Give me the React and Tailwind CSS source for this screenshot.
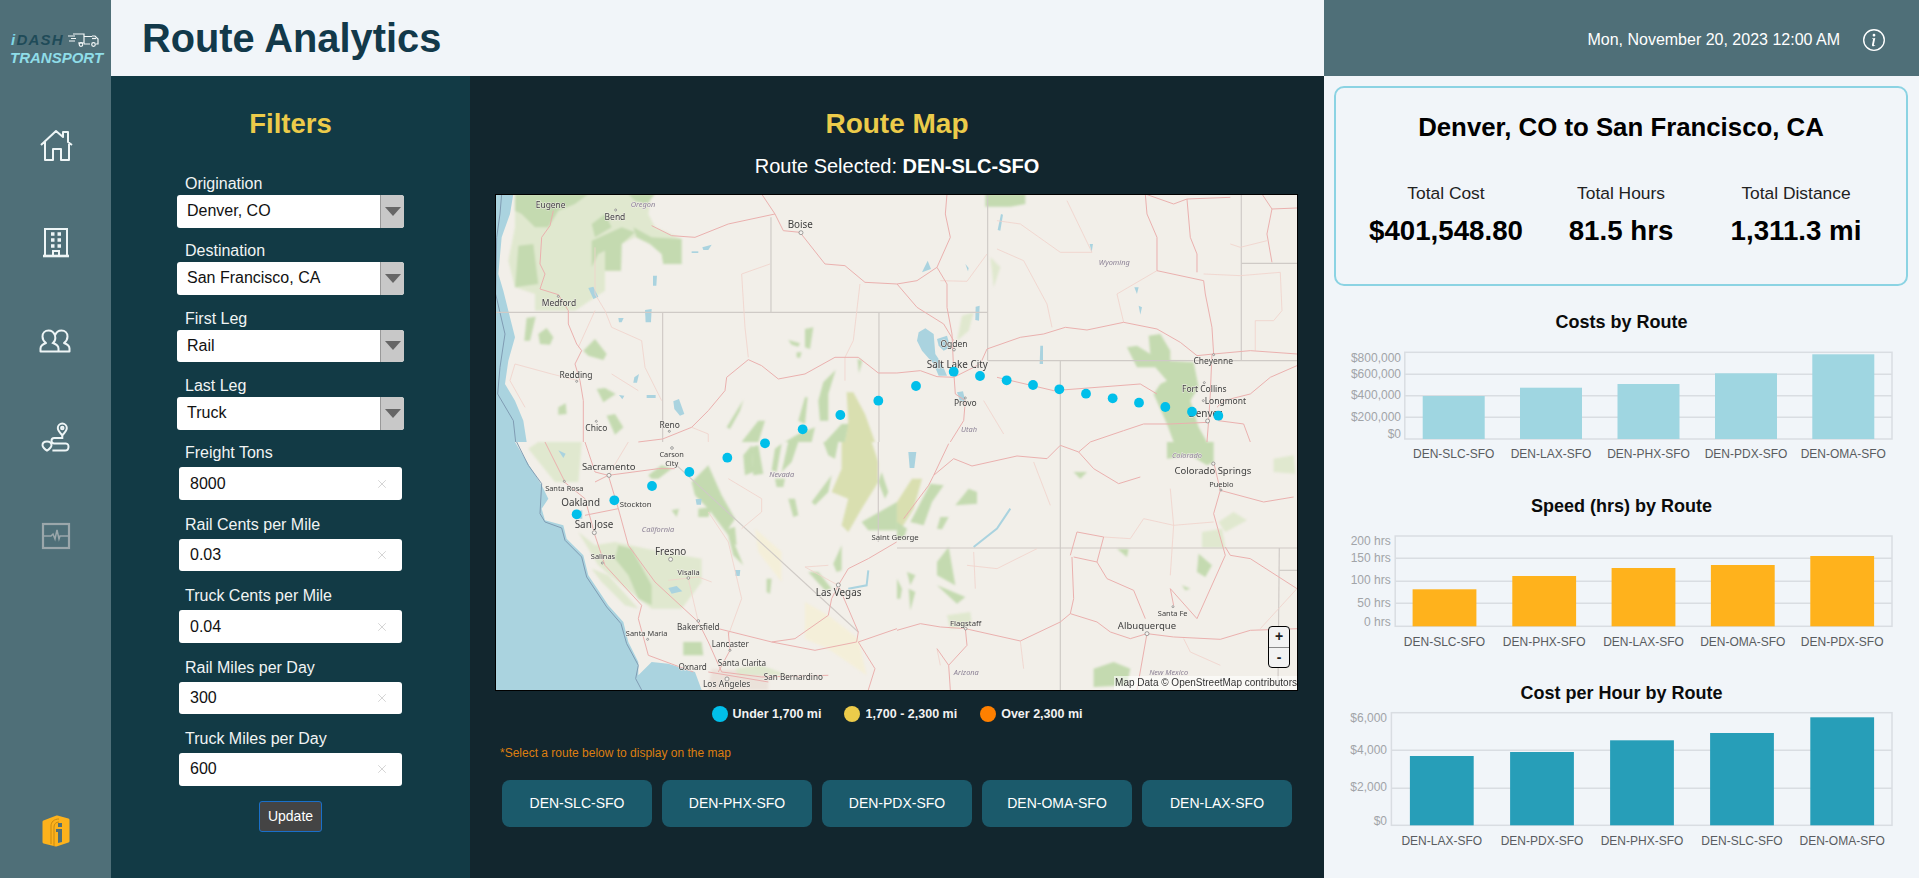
import React from "react";
import { BsInfoCircle } from "react-icons/bs";
import { X } from "lucide-react";

const selects = [
  { label: "Origination", value: "Denver, CO" },
  { label: "Destination", value: "San Francisco, CA" },
  { label: "First Leg", value: "Rail" },
  { label: "Last Leg", value: "Truck" },
];

const inputs = [
  { label: "Freight Tons", value: "8000" },
  { label: "Rail Cents per Mile", value: "0.03" },
  { label: "Truck Cents per Mile", value: "0.04" },
  { label: "Rail Miles per Day", value: "300" },
  { label: "Truck Miles per Day", value: "600" },
];

const routes = ["DEN-SLC-SFO", "DEN-PHX-SFO", "DEN-PDX-SFO", "DEN-OMA-SFO", "DEN-LAX-SFO"];

const stats = [
  { label: "Total Cost", value: "$401,548.80" },
  { label: "Total Hours", value: "81.5 hrs" },
  { label: "Total Distance", value: "1,311.3 mi" },
];

// chart numbers are page coordinates read off the picture, top is the page y of the svg
const charts = [
  {
    title: "Costs by Route",
    titleClass: "mt-[24px]",
    top: 334,
    height: 130,
    left: 1404.8,
    plotTop: 352.3,
    plotBottom: 439,
    grid: [374.3, 395.7, 417.3],
    labelX: 1401,
    labelY: 453.7,
    barWidth: 62,
    color: "#9fd6e1",
    ticks: [["$800,000", 357.7], ["$600,000", 374], ["$400,000", 394.7], ["$200,000", 416.7], ["$0", 434]],
    bars: [["DEN-SLC-SFO", 1453.7, 396], ["DEN-LAX-SFO", 1551, 387.7], ["DEN-PHX-SFO", 1648.5, 384], ["DEN-PDX-SFO", 1746, 373.3], ["DEN-OMA-SFO", 1843.3, 354.3]],
  },
  {
    title: "Speed (hrs) by Route",
    titleClass: "mt-[30px]",
    top: 518,
    height: 130,
    left: 1395.2,
    plotTop: 536,
    plotBottom: 626.3,
    grid: [558.3, 581.3, 603.3],
    labelX: 1390.7,
    labelY: 641.7,
    barWidth: 63.8,
    color: "#ffb21c",
    ticks: [["200 hrs", 540.7], ["150 hrs", 557.7], ["100 hrs", 580.3], ["50 hrs", 602.7], ["0 hrs", 621.7]],
    bars: [["DEN-SLC-SFO", 1444.5, 589.3], ["DEN-PHX-SFO", 1544.2, 576], ["DEN-LAX-SFO", 1643.5, 568], ["DEN-OMA-SFO", 1742.8, 565], ["DEN-PDX-SFO", 1842.2, 556]],
  },
  {
    title: "Cost per Hour by Route",
    titleClass: "mt-[33px]",
    top: 705,
    height: 145,
    left: 1391.4,
    plotTop: 712.7,
    plotBottom: 825.3,
    grid: [750.3, 788.3],
    labelX: 1387,
    labelY: 840.7,
    barWidth: 63.8,
    color: "#279eb8",
    ticks: [["$6,000", 717.7], ["$4,000", 749.7], ["$2,000", 786.7], ["$0", 821]],
    bars: [["DEN-LAX-SFO", 1441.8, 756], ["DEN-PDX-SFO", 1542, 752], ["DEN-PHX-SFO", 1642, 740.3], ["DEN-SLC-SFO", 1742, 733], ["DEN-OMA-SFO", 1842.2, 717.3]],
  },
];

// map pieces, each quadrant is in its own 1206x744 space (3 units = 1px)
const quadrants = [
  {
    x: 0,
    y: 0,
    light: [
      "M60 0 L470 0 L460 60 L480 100 L560 135 L560 210 L505 210 L500 180 L465 150 L420 130 L380 150 L378 230 L330 230 L330 290 L300 310 L240 350 L120 350 L120 300 L60 280 L40 200 L60 100Z",
    ],
    forest: [
      "M60 0 L280 0 L240 30 L190 50 L160 100 L120 100 L80 60 L60 50Z",
      "M70 155 L115 150 L130 270 L60 280 L65 220Z",
      "M290 140 L380 100 L420 115 L380 150 L378 230 L330 230 L330 170 L310 180 L290 220Z",
      "M290 90 L330 60 L350 100 L300 130Z",
      "M400 0 L480 0 L455 30 L420 20Z",
      "M415 100 L470 130 L560 135 L560 210 L505 210 L500 180 L465 150 L425 130Z",
      "M95 372 L122 368 L105 440 L88 440Z",
      "M130 420 L155 402 L175 430 L165 452 L135 450Z",
      "M265 470 L300 435 L335 480 L325 498 L280 485Z",
      "M305 585 L330 582 L362 600 L325 625Z",
      "M335 665 L360 660 L385 700 L360 722Z",
      "M190 640 L212 628 L215 660 L190 662Z",
      "M930 405 L955 400 L945 465 L930 460Z",
      "M880 438 L915 448 L910 458 L890 452Z",
      "M905 475 L920 475 L915 492 L905 490Z",
      "M1088 495 L1102 500 L1092 538Z",
      "M985 565 L1022 528 L1000 600 L1000 680 L975 680 L970 620Z",
      "M695 700 L745 618 L735 650 L705 705Z",
      "M930 610 L938 610 L930 690 L910 680Z",
      "M740 744 L790 680 L810 680 L790 744Z",
      "M870 744 L910 720 L960 700 L950 744Z",
      "M990 744 L1040 690 L1060 690 L1050 744Z",
    ],
    olive: ["M1055 595 L1075 595 L1110 660 L1140 744 L1050 744 L1060 680Z"],
    water: [
      "M0 0 L55 0 L45 60 L20 130 L10 240 L25 290 L40 350 L50 390 L60 430 L40 500 L30 570 L60 620 L85 680 L95 744 L0 744Z",
      "M535 622 L552 615 L568 660 L555 665 L538 645Z",
      "M450 348 L470 345 L468 385 L452 385Z",
      "M280 282 L295 278 L310 308 L295 315Z",
      "M622 160 L650 152 L640 168 L625 168Z",
      "M590 172 L610 172 L610 177 L590 177Z",
      "M474 245 L486 245 L484 275 L474 275Z",
      "M370 372 L386 372 L380 385 L372 385Z",
      "M418 550 L432 540 L426 566 L415 566Z",
      "M372 603 L388 605 L382 616Z",
      "M455 603 L482 603 L482 612 L455 612Z",
    ],
    major: [
      "175,50 165,95 140,130 135,210 150,240 135,285 190,302 220,350 220,390 245,450 260,470 240,510 255,560 265,620 265,744",
      "800,0 840,60 865,110 915,115 990,210 1050,215 1110,265 1206,270",
      "840,60 700,90 600,130 530,125 470,95",
      "430,744 503,735 590,700 640,650 690,590 695,550 760,497 800,515 850,555 930,540 1020,490 1090,490 1150,537 1206,537",
    ],
    minor: [
      "740,240 825,210",
      "740,240 750,400 760,490",
      "1095,270 1075,440 1050,490 1050,560",
      "300,160 300,300 330,350 350,400 440,440 450,520 500,620",
      "60,510 170,540 250,560",
      "60,510 45,560 90,640",
      "350,540 430,590",
      "300,350 250,460",
      "590,700 640,720 640,744",
    ],
    lines: ["828,70 828,355", "0,355 1206,355", "503,355 503,744", "1152,355 1152,744"],
    coast: "20,0 15,60 5,130 2,300 30,420 15,520 8,600 55,680 62,744",
    labels: [
      ["Eugene", 167, 41, 24],
      ["Bend", 360, 77, 24],
      ["Oregon", 444, 40, 21, true],
      ["Boise", 916, 103, 28],
      ["Medford", 192, 335, 24],
      ["Redding", 243, 552, 24],
      ["Chico", 304, 711, 24],
      ["Reno", 524, 702, 24],
    ],
    rings: [[918, 116, 6], [190, 307, 3], [245, 562, 3], [304, 682, 3], [362, 48, 3], [523, 712, 3]],
  },
  {
    x: 402,
    y: 0,
    light: ["M195 365 L230 355 L215 410 L180 440Z", "M280 190 L310 220 L290 280 L285 230Z"],
    forest: [
      "M265 0 L385 0 L385 30 L340 38 L265 38Z",
      "M690 460 L720 455 L760 480 L755 425 L790 420 L820 470 L820 500 L890 505 L905 580 L880 620 L890 650 L905 700 L930 744 L830 744 L810 690 L770 600 L790 570 L810 560 L775 520 L720 520Z",
    ],
    olive: [],
    water: [
      "M65 415 L85 403 L110 420 L115 480 L135 510 L150 545 L125 545 L110 510 L75 470 L60 440Z",
      "M120 435 L150 425 L160 460 L140 470 L125 455Z",
      "M236 338 L248 335 L246 380 L235 378Z",
      "M312 60 L318 62 L310 110 L302 108Z",
      "M430 455 L438 455 L438 510 L428 510Z",
      "M75 235 L92 200 L102 225Z",
      "M205 210 L215 222 L213 232Z",
      "M180 595 L198 592 L205 622 L190 625Z",
      "M712 280 L725 280 L720 300Z",
      "M725 335 L735 340 L730 362Z",
      "M578 150 L588 150 L584 175Z",
    ],
    major: [
      "0,270 60,260 120,220 160,130 145,60 150,0",
      "120,220 150,270 150,340 165,420 170,530 175,600 205,620 200,680 160,744",
      "0,270 60,340 140,390 170,440",
      "0,537 70,530 120,548 170,550 250,510 270,465 370,430 440,420 505,400 570,408 680,385 780,405 850,445 900,485 950,480 1060,470 1200,480",
      "950,480 945,400 925,300 920,260 780,230 780,130 750,60 745,0",
      "745,0 830,30 870,15 1000,10",
      "870,15 880,130 900,180 900,235",
      "945,480 940,600 935,680 930,744",
      "964,680 1040,690 1060,744",
      "935,685 820,690 740,690 680,710 580,744",
      "300,550 470,590 730,570 780,600",
      "1200,515 1120,550 1060,600 980,620 960,640",
      "1095,0 1125,45 1110,120 1125,205",
      "1125,45 1200,42",
    ],
    minor: [
      "300,80 370,90 490,175 585,175 510,20",
      "300,165 380,200 450,330 465,400",
      "660,300 680,385",
      "660,300 780,230",
      "1000,150 1030,160 1110,140",
      "920,240 1030,245 1150,235 1155,350 1130,380 1075,380 1075,470",
      "130,260 210,262 270,180",
      "260,620 320,720",
    ],
    lines: [
      "272,0 272,500",
      "0,355 272,355",
      "272,500 1200,500",
      "490,500 490,744",
      "1033,0 1033,500",
      "1033,208 1200,208",
    ],
    labels: [
      ["Wyoming", 652, 212, 21, true],
      ["Ogden", 171, 459, 24],
      ["Salt Lake City", 181, 523, 28],
      ["Provo", 205, 637, 24],
      ["Utah", 216, 715, 21, true],
      ["Cheyenne", 949, 509, 24],
      ["Fort Collins", 922, 593, 24],
      ["Longmont", 985, 629, 24],
      ["Denver", 925, 668, 28],
    ],
    rings: [[171, 467, 4], [205, 612, 3], [950, 482, 3], [922, 566, 3], [919, 620, 3], [932, 681, 6]],
  },
  {
    x: 0,
    y: 248,
    light: [
      "M250 270 L300 310 L360 300 L500 330 L620 350 L620 420 L560 500 L470 500 L380 430 L310 370Z",
      "M720 680 L800 670 L880 700 L800 700 L730 700Z",
      "M100 20 L130 0 L260 0 L250 120 L180 120Z",
      "M290 380 L340 400 L430 500 L390 490 L320 420Z",
    ],
    forest: [
      "M370 310 L410 320 L470 430 L470 490 L430 470 L400 400 L360 350Z",
      "M590 120 L640 70 L680 160 L720 230 L700 260 L745 370 L715 340 L700 280 L640 200 L600 160Z",
      "M460 100 L500 70 L530 80 L490 110 L470 110Z",
      "M745 40 L770 10 L775 90 L750 100Z",
      "M770 15 L790 10 L805 95 L775 100Z",
      "M840 20 L860 5 L845 90 L830 85Z",
      "M880 0 L910 0 L890 60 L860 90Z",
      "M880 170 L900 170 L910 220 L895 225Z",
      "M950 180 L1010 100 L1000 150 L960 190Z",
      "M840 110 L870 110 L865 135 L845 135Z",
      "M985 0 L1030 0 L1020 50 L1000 40Z",
      "M1100 240 L1206 180 L1206 265 L1120 265Z",
      "M1160 90 L1180 150 L1170 170 L1150 120Z",
      "M940 390 L970 390 L1010 440 L990 445Z",
      "M1015 365 L1040 310 L1040 385 L1025 390Z",
      "M815 410 L830 410 L825 455 L815 450Z",
      "M565 600 L620 600 L625 640 L565 640Z",
      "M530 205 L552 200 L545 225Z",
      "M610 200 L650 195 L640 225 L610 225Z",
      "M700 260 L720 255 L725 310 L705 300Z",
    ],
    olive: ["M1040 0 L1130 0 L1150 60 L1150 120 L1100 200 L1060 270 L1040 250 L1060 170 L1010 150 L1040 80Z"],
    sand: ["M930 480 L1000 520 L1090 590 L1115 700 L1000 620 L930 590Z", "M780 260 L860 330 L860 420 L790 330Z"],
    urban: ["M650 680 L820 690 L820 744 L640 744Z"],
    water: [
      "M0 0 L60 0 L90 50 L140 130 L160 170 L140 200 L150 235 L205 250 L215 290 L265 340 L280 400 L340 490 L385 540 L400 600 L430 660 L430 700 L470 660 L520 665 L600 690 L620 744 L0 744Z",
      "M602 172 L620 170 L618 188 L605 188Z",
      "M720 384 L736 384 L734 402 L722 402Z",
      "M520 438 L545 432 L562 448 L530 455Z",
      "M190 25 L212 35 L205 48Z",
      "M240 210 L262 205 L262 230 L240 232Z",
    ],
    major: [
      "340,100 370,200 400,310 480,420 610,540 640,600 680,690",
      "300,120 340,100 490,80 540,80",
      "208,120 270,170 300,280 330,370 440,490 430,530 460,640 595,690",
      "370,200 270,220",
      "670,560 830,600 900,590 1000,520 1010,470 1030,430",
      "830,600 960,625 1085,600 1090,570 1030,430 1060,380 1120,350 1205,300",
      "700,570 705,625 670,690",
      "1090,600 1206,560",
      "680,690 800,705 1000,700",
      "1090,600 1140,680 1120,744",
      "640,690 820,720",
      "150,0 210,120",
      "270,0 300,90 340,100",
    ],
    minor: [
      "520,415 610,405 650,420",
      "580,410 610,540",
      "1030,430 930,375 1000,370",
      "700,580 740,470 700,300 640,210",
      "700,110 800,170 800,210 740,260",
      "400,0 340,100",
    ],
    lines: ["545,70 1090,570", "1150,0 1150,300"],
    coast: "65,0 100,70 140,125 135,215 150,240 200,258 210,295 260,345 275,405 335,495 378,545 395,605 430,670 422,710 440,744",
    lake: "1060,440 1115,430 1120,385",
    labels: [
      ["Carson", 530, 45, 21],
      ["City", 530, 73, 21],
      ["Sacramento", 341, 85, 27],
      ["Santa Rosa", 208, 146, 21],
      ["Oakland", 257, 193, 28],
      ["Stockton", 422, 194, 22],
      ["San Jose", 297, 258, 28],
      ["California", 489, 271, 21, true],
      ["Fresno", 527, 340, 28],
      ["Salinas", 324, 352, 21],
      ["Visalia", 581, 398, 21],
      ["Nevada", 860, 106, 21, true],
      ["Las Vegas", 1031, 463, 28],
      ["Bakersfield", 610, 564, 23],
      ["Santa Maria", 455, 582, 21],
      ["Lancaster", 706, 616, 23],
      ["Oxnard", 593, 683, 23],
      ["Santa Clarita", 741, 672, 23],
      ["San Bernardino", 895, 713, 23],
      ["Los Angeles", 695, 736, 24],
    ],
    rings: [[342, 100, 6], [298, 272, 6], [527, 352, 6], [580, 408, 4], [610, 537, 4], [1030, 429, 6], [696, 711, 6], [705, 625, 3], [531, 18, 4], [208, 118, 3], [322, 363, 3], [458, 592, 3]],
  },
  {
    x: 402,
    y: 248,
    light: [
      "M150 520 L220 510 L225 550 L160 560Z",
      "M965 240 L1010 210 L1050 235 L985 270Z",
      "M915 270 L975 260 L985 318 L915 318Z",
      "M1130 50 L1190 40 L1195 95 L1130 90Z",
    ],
    forest: [
      "M40 240 L100 125 L140 130 L105 180 L80 250Z",
      "M120 260 L130 225 L155 225 L135 262Z",
      "M175 190 L215 140 L240 150 L240 185Z",
      "M120 360 L155 315 L175 430 L120 400Z",
      "M120 430 L205 465 L180 485Z",
      "M30 390 L55 400 L40 430Z",
      "M35 440 L55 450 L40 505Z",
      "M0 410 L15 440 L10 470 L0 470Z",
      "M530 90 L570 90 L550 110Z",
      "M905 335 L945 370 L925 405 L900 390Z",
      "M660 320 L695 320 L690 345Z",
      "M590 680 L650 660 L700 680 L690 730 L590 735Z",
      "M810 0 L950 0 L950 60 L930 70 L880 40 L810 50Z",
      "M855 430 L880 440 L865 445Z",
      "M0 240 L30 260 L20 290 L0 290Z",
    ],
    olive: ["M0 180 L45 110 L75 110 L50 200 L0 280Z"],
    water: ["M34 30 L58 30 L52 78 L38 78Z"],
    major: [
      "0,565 70,545 130,555 205,560 370,597 490,540 520,515 600,540 640,570 700,590 750,575 830,585 970,592 1060,565 1206,560",
      "750,575 720,744",
      "205,560 210,610 155,670 160,744",
      "155,670 120,620",
      "830,490 820,440",
      "820,440 900,530 985,340 950,215 970,145",
      "745,530 710,445 630,410 600,360 530,345",
      "525,345 530,470 520,515",
      "20,230 95,130 110,100 155,5",
      "110,100 170,50 225,72 360,42 450,50 490,10 545,30 590,80 665,125 730,105",
      "545,30 580,0",
      "985,315 1000,340 1060,350 1200,440",
      "950,60 970,145 1100,180 1190,165",
      "540,270 620,285 600,360",
      "540,270 520,340",
    ],
    minor: [
      "230,330 235,440",
      "210,370 300,380 420,320",
      "820,140 830,250 820,400",
      "620,285 700,290 740,230 830,250 950,240",
      "460,190 410,60",
      "860,590 880,630 970,670",
      "370,597 380,680",
      "1090,560 1200,440",
      "120,620 130,670",
    ],
    lines: ["0,318 1200,318", "490,0 490,744", "1147,318 1143,744", "1147,385 1200,385"],
    lake: "230,315 300,260 340,200",
    labels: [
      ["Colorado", 870, 47, 21, true],
      ["Colorado Springs", 948, 97, 27],
      ["Pueblo", 973, 135, 21],
      ["Santa Fe", 827, 522, 21],
      ["Albuquerque", 750, 562, 27],
      ["Flagstaff", 206, 551, 22],
      ["Arizona", 208, 698, 21, true],
      ["New Mexico", 815, 700, 21, true],
      ["Saint George", -6, 293, 22],
    ],
    rings: [[949, 65, 5], [972, 144, 3], [828, 494, 3], [750, 575, 6], [206, 560, 4]],
  },
];

const pins = [
  [1150, 620], [1036, 663], [923, 706], [810, 748],
  [697, 791], [583, 834], [471, 876], [358, 919], [245, 961],
  [1263, 576], [1376, 533], [1455, 546], [1535, 559], [1614, 573], [1693, 586],
  [1773, 599], [1853, 613], [1932, 626], [2011, 639], [2091, 653], [2170, 665],
];

const RouteMap = () => (
  <svg viewBox="1 1 801 495" className="block w-[801px] h-[495px] font-['Noto_Sans',sans-serif]">
    <defs>
      <filter id="patch">
        <feGaussianBlur stdDeviation="1.1" />
      </filter>
      <filter id="soft">
        <feGaussianBlur stdDeviation="0.35" />
      </filter>
    </defs>
    <rect x="0" y="0" width="804" height="496" fill="#f2efe9" />
    <g filter="url(#patch)">
      {quadrants.map((q) => (
        <g key={`${q.x}-${q.y}`} transform={`translate(${q.x} ${q.y}) scale(0.3333)`}>
          {(q.urban || []).map((d) => <path key={d} d={d} fill="#ebe2da" />)}
          {(q.sand || []).map((d) => <path key={d} d={d} fill="#f4efd9" />)}
          {q.light.map((d) => <path key={d} d={d} fill="#e0e8cf" />)}
          {q.olive.map((d) => <path key={d} d={d} fill="#d9dfb0" />)}
          {q.forest.map((d) => <path key={d} d={d} fill="#c4dab0" />)}
        </g>
      ))}
    </g>
    <g filter="url(#soft)">
      {quadrants.map((q) => (
        <g key={`${q.x}-${q.y}`} transform={`translate(${q.x} ${q.y}) scale(0.3333)`}>
          {q.water.map((d) => <path key={d} d={d} fill="#aad3df" />)}
          {q.coast && <polyline points={q.coast} fill="none" stroke="#7f9cb3" strokeWidth="3" />}
          {q.lake && <polyline points={q.lake} fill="none" stroke="#aad3df" strokeWidth="6" />}
          {q.lines.map((p) => <polyline key={p} points={p} fill="none" stroke="#cfcac6" strokeWidth="3.5" />)}
          {q.minor.map((p) => <polyline key={p} points={p} fill="none" stroke="#f0d3cb" strokeWidth="2.5" />)}
          {q.major.map((p) => <polyline key={p} points={p} fill="none" stroke="#eab0ae" strokeWidth="3" strokeLinejoin="round" />)}
        </g>
      ))}
    </g>
    {quadrants.map((q) => (
      <g key={`t-${q.x}-${q.y}`} transform={`translate(${q.x} ${q.y}) scale(0.3333)`}>
        {q.rings.map(([cx, cy, r]) => (
          <circle key={`${cx}-${cy}`} cx={cx} cy={cy} r={r} fill="#f5f3ef" stroke="#777" strokeWidth="2" />
        ))}
        {q.labels.map(([text, x, y, size, italic]) => (
          <text
            key={text}
            x={x}
            y={y}
            fontSize={size * 1.06}
            textAnchor="middle"
            fill={italic ? "#8c8296" : "#404040"}
            fontStyle={italic ? "italic" : "normal"}
            stroke="#f2efe9"
            strokeWidth="2.5"
            paintOrder="stroke"
          >
            {text}
          </text>
        ))}
      </g>
    ))}
    {pins.map(([x, y]) => (
      <circle key={`${x}-${y}`} cx={x / 3} cy={y / 3} r="4.9" fill="#01bfea" />
    ))}
  </svg>
);

const Chart = ({ chart }) => {
  const y = (v) => v - chart.top;
  const x = (v) => v - 1324;
  const right = x(1892);
  return (
    <>
      <h3 className={`${chart.titleClass} h-[24px] text-center text-[18px] leading-[24px] font-bold text-[#0b0b0b]`}>
        {chart.title}
      </h3>
      <svg width="595" height={chart.height} className="block">
        <rect
          x={x(chart.left)}
          y={y(chart.plotTop)}
          width={right - x(chart.left)}
          height={chart.plotBottom - chart.plotTop}
          fill="none"
          stroke="#d9dde2"
          strokeWidth="1.5"
        />
        {chart.grid.map((g) => (
          <line key={g} x1={x(chart.left)} x2={right} y1={y(g)} y2={y(g)} stroke="#d9dde2" strokeWidth="1.5" />
        ))}
        {chart.ticks.map(([label, ty]) => (
          <text key={label} x={x(chart.labelX)} y={y(ty) + 4} textAnchor="end" fontSize="12" fill="#a1a4a8">
            {label}
          </text>
        ))}
        {chart.bars.map(([label, cx, top]) => (
          <g key={label}>
            <rect
              x={x(cx) - chart.barWidth / 2}
              y={y(top)}
              width={chart.barWidth}
              height={chart.plotBottom - top}
              fill={chart.color}
            />
            <text x={x(cx)} y={y(chart.labelY) + 4} textAnchor="middle" fontSize="12" fill="#595c60">
              {label}
            </text>
          </g>
        ))}
      </svg>
    </>
  );
};

const SelectField = ({ label, value }) => (
  <div className="mb-[14.73px]">
    <div className="pl-[8px] mb-[2px] h-[18px] text-[16px] leading-[18px] text-[#f1f4f4]">{label}</div>
    <div className="flex h-[32.6px] w-[227px] rounded-[3px] bg-white overflow-hidden">
      <div className="flex-1 pl-[10px] text-[16px] leading-[32px] text-[#111]">{value}</div>
      <div className="flex w-[24px] items-center justify-center border-l border-[#999] bg-[#c8c8c8]">
        <div className="h-0 w-0 border-x-[8px] border-t-[9px] border-x-transparent border-t-[#666]" />
      </div>
    </div>
  </div>
);

const InputField = ({ label, value }) => (
  <div className="mb-[15.9px]">
    <div className="pl-[8px] mb-[5px] h-[18px] text-[16px] leading-[18px] text-[#f1f4f4]">{label}</div>
    <div className="ml-[2px] flex h-[32.6px] w-[223px] items-center justify-between rounded-[3px] bg-white pl-[11px] pr-[13px]">
      <span className="text-[16px] text-[#111]">{value}</span>
      <X size={14} strokeWidth={1.5} className="text-[#cfcfcf]" />
    </div>
  </div>
);

const iconClass = "w-[40px] h-[40px] fill-none stroke-[#eef5f6] stroke-[2]";

const Sidebar = () => (
  <aside className="flex w-[111px] shrink-0 flex-col items-center bg-[#4f6f78]">
    <div className="relative h-[76px] w-full italic font-bold">
      <div className="absolute left-[11px] top-[32px] text-[15px] leading-[16px] tracking-[1.2px] text-[#1f4b58]">
        <span className="text-[#7fd8e6]">i</span>DASH
      </div>
      <svg viewBox="0 0 32 14" className="absolute left-[68px] top-[33px] w-[32px] h-[14px] fill-none stroke-[#f4f8f8] stroke-[1.2]">
        <path d="M0 3h7M3 5.5h5M1 8h6M5 1h11v9h-6M16 3.5h5l3 0M16 10V3.5M24 3h3l3 3v5h-2M22 11h-6" />
        <circle cx="13" cy="11.5" r="1.8" />
        <circle cx="25.5" cy="11.5" r="1.8" />
        <path d="M24 5.5h4" />
      </svg>
      <div className="absolute left-[10px] top-[50px] text-[15px] leading-[16px] text-[#8fdde8]">
        TRANSPORT
      </div>
    </div>
    <div className="mt-[21px] flex flex-col items-center">
      <div className="flex h-[97.5px] items-center">
        <svg viewBox="0 0 40 40" className={iconClass}>
          <path d="M6 20 21 6l7 6V7h5v10l4 3M10 17v18h8V24h8v11h8V17" strokeLinejoin="round" transform="translate(-1 -1)" />
        </svg>
      </div>
      <div className="flex h-[97.5px] items-center">
        <svg viewBox="0 0 40 40" className={iconClass}>
          <path d="M9 33V6h22v27" />
          <path d="M7 33h26" strokeWidth="2.6" />
          <path d="M15 11h3.500M21.500 11h3.500M15 17h3.500M21.500 17h3.500M15 23h3.500M21.500 23h3.500" strokeWidth="3.500" />
          <path d="M17 33v-5h6v5" />
        </svg>
      </div>
      <div className="flex h-[97.5px] items-center">
        <svg viewBox="0 0 40 40" className={iconClass}>
          <path d="M4.500 30.500v-3c0-3 3-4.500 5.500-5.500-2-1.500-3.500-3.500-3.500-6.500 0-3.500 2.500-6 6-6 3 0 5.500 2 6.500 5 1-3 3.500-5 6.500-5 3.500 0 6 2.500 6 6 0 3-1.500 5-3.500 6.500 2.500 1 5.500 2.500 5.500 5.500v3z" strokeLinejoin="round" />
          <path d="M19 15c1 3 0 5-2 7 2.500 1 5.500 2.500 5.500 5.500v3" />
        </svg>
      </div>
      <div className="flex h-[97.5px] items-center">
        <svg viewBox="0 0 40 40" className="w-[36px] h-[36px] fill-none stroke-[#eef5f6] stroke-[2.2]">
          <path d="M27 4a5 5 0 0 1 5 5c0 3-3 6-5 8-2-2-5-5-5-8a5 5 0 0 1 5-5z" />
          <circle cx="27" cy="9" r="1.4" />
          <path d="M27 17v3h-9c-4 0-4 6 0 6h13c4 0 4 8-1 8H16" />
          <path d="M10 24c3 0 5 1.500 5 4 0 2-3 5-5 6-2-1-5-4-5-6 0-2.500 2-4 5-4z" />
        </svg>
      </div>
      <div className="flex h-[97.5px] items-center">
        <svg viewBox="0 0 40 40" className="w-[40px] h-[40px] fill-none stroke-[#9ba7ab] stroke-[2.2]">
          <rect x="7" y="8" width="26" height="24" />
          <path d="M8 20h7l2-2 2 5 2-9 2 9 1-3h8" strokeWidth="1.5" />
        </svg>
      </div>
    </div>
    <svg viewBox="0 0 30 32" className="mt-auto mb-[31px] w-[30px] h-[32px]">
      <path d="M3 7 16 2l11 3v21l-12 4-12-3z" fill="#fdb21c" stroke="#fdb21c" strokeWidth="3" strokeLinejoin="round" />
      <path d="M10 29V11c0-4 3-7 8-7M13 31V12c0-3 2-5 5-5" fill="none" stroke="#c98a10" strokeWidth="1" />
      <rect x="17" y="8" width="4" height="4" fill="#4f6f78" />
      <path d="M15 14h6v13l-4 1V17h-2z" fill="#4f6f78" />
    </svg>
  </aside>
);

const App = () => (
  <div className="flex h-screen overflow-hidden font-['Liberation_Sans',Arial,sans-serif]">
    <Sidebar />
    <div className="flex min-w-0 flex-1 flex-col">
      <header className="flex h-[76px] shrink-0">
        <div className="flex w-[1213px] items-center bg-[#f1f5f9] pl-[31px] pt-[2px]">
          <h1 className="text-[39.8px] font-bold leading-none text-[#12394a]">Route Analytics</h1>
        </div>
        <div className="flex flex-1 items-center justify-end bg-[#4f6f78] pr-[34px] pt-[3px] text-white">
          <span className="text-[16px]">Mon, November 20, 2023 12:00 AM</span>
          <BsInfoCircle size={22} className="ml-[23px]" />
        </div>
      </header>
      <div className="flex flex-1">
        <section className="w-[359px] bg-[#123a45] pl-[66px] pt-[32px]">
          <h2 className="mb-[35px] w-[227px] text-center text-[27.5px] font-bold leading-[32px] text-[#eccb4a]">Filters</h2>
          {selects.map((f) => (
            <SelectField key={f.label} {...f} />
          ))}
          <div className="mt-[1px]">
            {inputs.map((f) => (
              <InputField key={f.label} {...f} />
            ))}
          </div>
          <div className="-mt-[1px] flex w-[227px] justify-center">
            <button className="h-[31px] w-[63px] rounded-[3px] border-[1.5px] border-[#1a6fc9] bg-[#444] text-[14px] text-white">
              Update
            </button>
          </div>
        </section>
        <section className="flex w-[854px] flex-col bg-[#12262e] pt-[32px]">
          <h2 className="text-center text-[28px] font-bold leading-[32px] text-[#eccb4a]">Route Map</h2>
          <p className="mt-[14px] mb-[16px] text-center text-[20px] leading-[24px] text-white">
            Route Selected: <b>DEN-SLC-SFO</b>
          </p>
          <div className="relative ml-[25px] w-[803px] border border-black">
            <RouteMap />
            <div className="absolute right-[7px] bottom-[22px] flex h-[42px] w-[22px] flex-col rounded-[4px] border-[1.5px] border-black bg-[#f2f2f2] text-center text-[14px] font-bold leading-[19px] text-[#222]">
              <div className="flex-1 border-b border-[#888]">+</div>
              <div className="flex-1">-</div>
            </div>
            <div className="absolute right-0 bottom-0 bg-white/60 pl-[1px] text-[10px] leading-[14px] text-[#333]">
              Map Data © OpenStreetMap contributors
            </div>
          </div>
          <div className="mt-[15px] flex h-[16px] items-center justify-center gap-[23px] text-[12.5px] font-bold text-[#f2f2f2]">
            <div className="flex items-center gap-[5px]">
              <span className="h-[16px] w-[16px] rounded-full bg-[#01bfea]" />
              Under 1,700 mi
            </div>
            <div className="flex items-center gap-[5px]">
              <span className="h-[16px] w-[16px] rounded-full bg-[#eccb4a]" />
              1,700 - 2,300 mi
            </div>
            <div className="flex items-center gap-[5px]">
              <span className="h-[16px] w-[16px] rounded-full bg-[#ff8000]" />
              Over 2,300 mi
            </div>
          </div>
          <p className="mt-[24px] pl-[30px] text-[12px] leading-[14px] text-[#dd7e10]">
            *Select a route below to display on the map
          </p>
          <div className="mt-[20px] flex gap-[10px] pl-[32px]">
            {routes.map((r) => (
              <button key={r} className="h-[47px] w-[150px] rounded-[8px] bg-[#1b5a6b] text-[14px] text-white">
                {r}
              </button>
            ))}
          </div>
        </section>
        <section className="flex-1 bg-[#f1f5f9]">
          <div className="mt-[10px] ml-[10px] h-[200px] w-[574px] rounded-[10px] border-2 border-[#8bd3e3] pt-[24px] text-center">
            <h2 className="text-[25.8px] font-bold leading-[30px] text-black">Denver, CO to San Francisco, CA</h2>
            <div className="mx-auto mt-[41px] grid w-[525px] grid-cols-3">
              {stats.map((s) => (
                <div key={s.label}>
                  <div className="text-[17.4px] leading-[20px] text-[#222]">{s.label}</div>
                  <div className="mt-[12px] text-[27.7px] font-bold leading-[32px] text-black">{s.value}</div>
                </div>
              ))}
            </div>
          </div>
          {charts.map((c) => (
            <Chart key={c.title} chart={c} />
          ))}
        </section>
      </div>
    </div>
  </div>
);

export default App;
